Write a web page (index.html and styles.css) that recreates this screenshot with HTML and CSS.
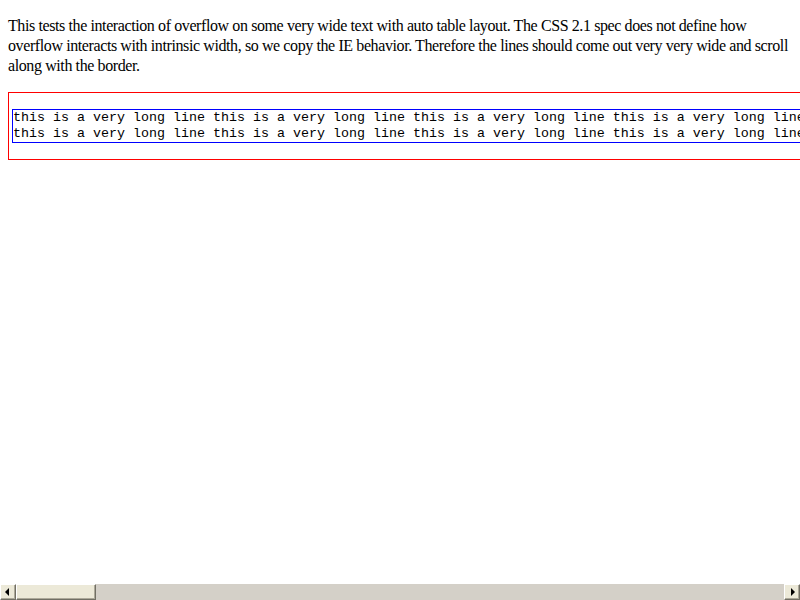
FILE: index.html
```html
<!DOCTYPE html>
<html>
<head>
<meta charset="utf-8">
<link rel="stylesheet" href="styles.css">
</head>
<body>
<p class="intro">This tests the interaction of overflow on some very wide text with auto table layout. The CSS 2.1 spec does not define how overflow interacts with intrinsic width, so we copy the IE behavior. Therefore the lines should come out very very wide and scroll along with the border.</p>
<table class="outer">
<tr><td class="cell"><pre class="lines">this is a very long line this is a very long line this is a very long line this is a very long line this is a very long line this is a very long line this is a very long line this is a very long line this is a very long line this is a very long line this is a very long line this is a very long line
this is a very long line this is a very long line this is a very long line this is a very long line this is a very long line this is a very long line this is a very long line this is a very long line this is a very long line this is a very long line this is a very long line this is a very long line</pre></td></tr>
</table>
<div class="hscroll">
  <div class="sb-btn sb-left"><span class="arrow-left"></span></div>
  <div class="sb-thumb"></div>
  <div class="sb-track"></div>
  <div class="sb-btn sb-right"><span class="arrow-right"></span></div>
</div>
</body>
</html>
```
FILE: styles.css
```css
html {
  overflow: hidden;
  background: #fff;
}
body {
  margin: 0;
  padding: 8px;
  font-family: "Liberation Serif", "Times New Roman", serif;
  font-size: 16px;
  color: #000;
}
.intro {
  margin: 8px 0 16px 0;
  line-height: 20px;
  letter-spacing: -0.4px;
}
.outer {
  border: 1px solid red;
  border-spacing: 2px;
  border-collapse: separate;
  width: max-content;
}
.cell {
  padding: 1px;
}
.lines {
  margin: 13px 0;
  border: 1px solid blue;
  font-family: "Liberation Mono", "Courier New", monospace;
  font-size: 13.333px;
  line-height: 16px;
}
.hscroll {
  position: fixed;
  left: 0;
  right: 0;
  bottom: 0;
  height: 16px;
  display: flex;
  background: #d4d0c8;
}
.sb-btn, .sb-thumb {
  box-sizing: border-box;
  height: 16px;
  background: #ece9d8;
  border-top: 1px solid #fff;
  border-left: 1px solid #fff;
  border-right: 1px solid #716f64;
  border-bottom: 1px solid #716f64;
  box-shadow: inset -1px -1px 0 #aca899;
}
.sb-btn {
  width: 16px;
  display: flex;
  align-items: center;
  justify-content: center;
}
.sb-thumb {
  width: 80px;
}
.sb-track {
  flex: 1;
}
.arrow-left {
  width: 0;
  height: 0;
  border-top: 4px solid transparent;
  border-bottom: 4px solid transparent;
  border-right: 4px solid #000;
  margin-right: 2px;
}
.arrow-right {
  width: 0;
  height: 0;
  border-top: 4px solid transparent;
  border-bottom: 4px solid transparent;
  border-left: 4px solid #000;
  margin-left: 2px;
}
```
